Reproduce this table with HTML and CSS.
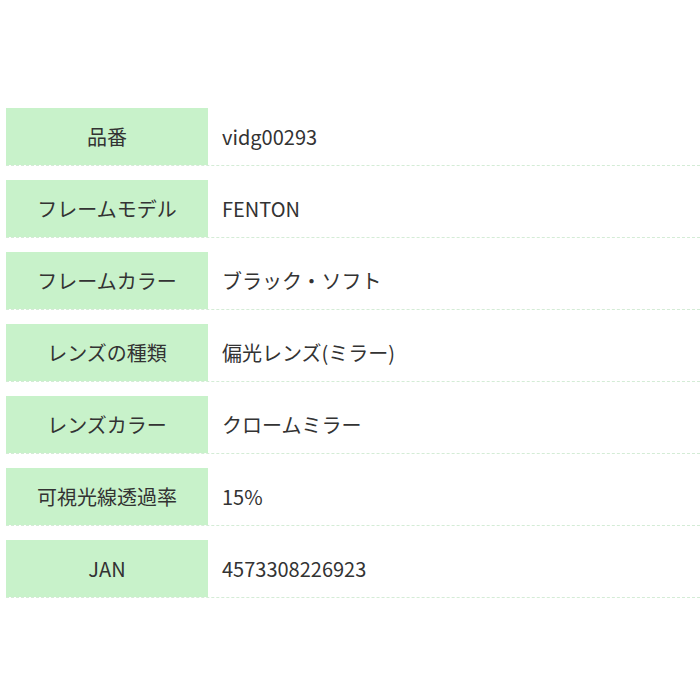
FILE: index.html
```html
<!DOCTYPE html>
<html lang="ja">
<head>
<meta charset="utf-8">
<link rel="stylesheet" href="styles.css">
</head>
<body>
<div class="spec">
  <div class="row"><div class="label">品番</div><div class="value">vidg00293</div></div>
  <div class="row"><div class="label">フレームモデル</div><div class="value">FENTON</div></div>
  <div class="row"><div class="label">フレームカラー</div><div class="value">ブラック・ソフト</div></div>
  <div class="row"><div class="label">レンズの種類</div><div class="value">偏光レンズ(ミラー)</div></div>
  <div class="row"><div class="label">レンズカラー</div><div class="value">クロームミラー</div></div>
  <div class="row"><div class="label">可視光線透過率</div><div class="value">15%</div></div>
  <div class="row"><div class="label">JAN</div><div class="value">4573308226923</div></div>
</div>
</body>
</html>
```
FILE: styles.css
```css
html, body {
  margin: 0;
  padding: 0;
  background: #fff;
}
body {
  font-family: "Noto Sans CJK JP", "Noto Sans", sans-serif;
  color: #333;
  font-size: 20px;
}
.spec {
  display: flex;
  flex-direction: column;
  gap: 14px;
  padding: 108px 0 0 6px;
}
.row {
  display: flex;
  height: 58px;
  border-bottom: 1px dashed #d4ecd6;
  box-sizing: border-box;
}
.label {
  width: 202px;
  background: #c8f2ca;
  display: flex;
  align-items: center;
  justify-content: center;
}
.value {
  flex: 1;
  display: flex;
  align-items: center;
  padding-left: 14px;
}
```
